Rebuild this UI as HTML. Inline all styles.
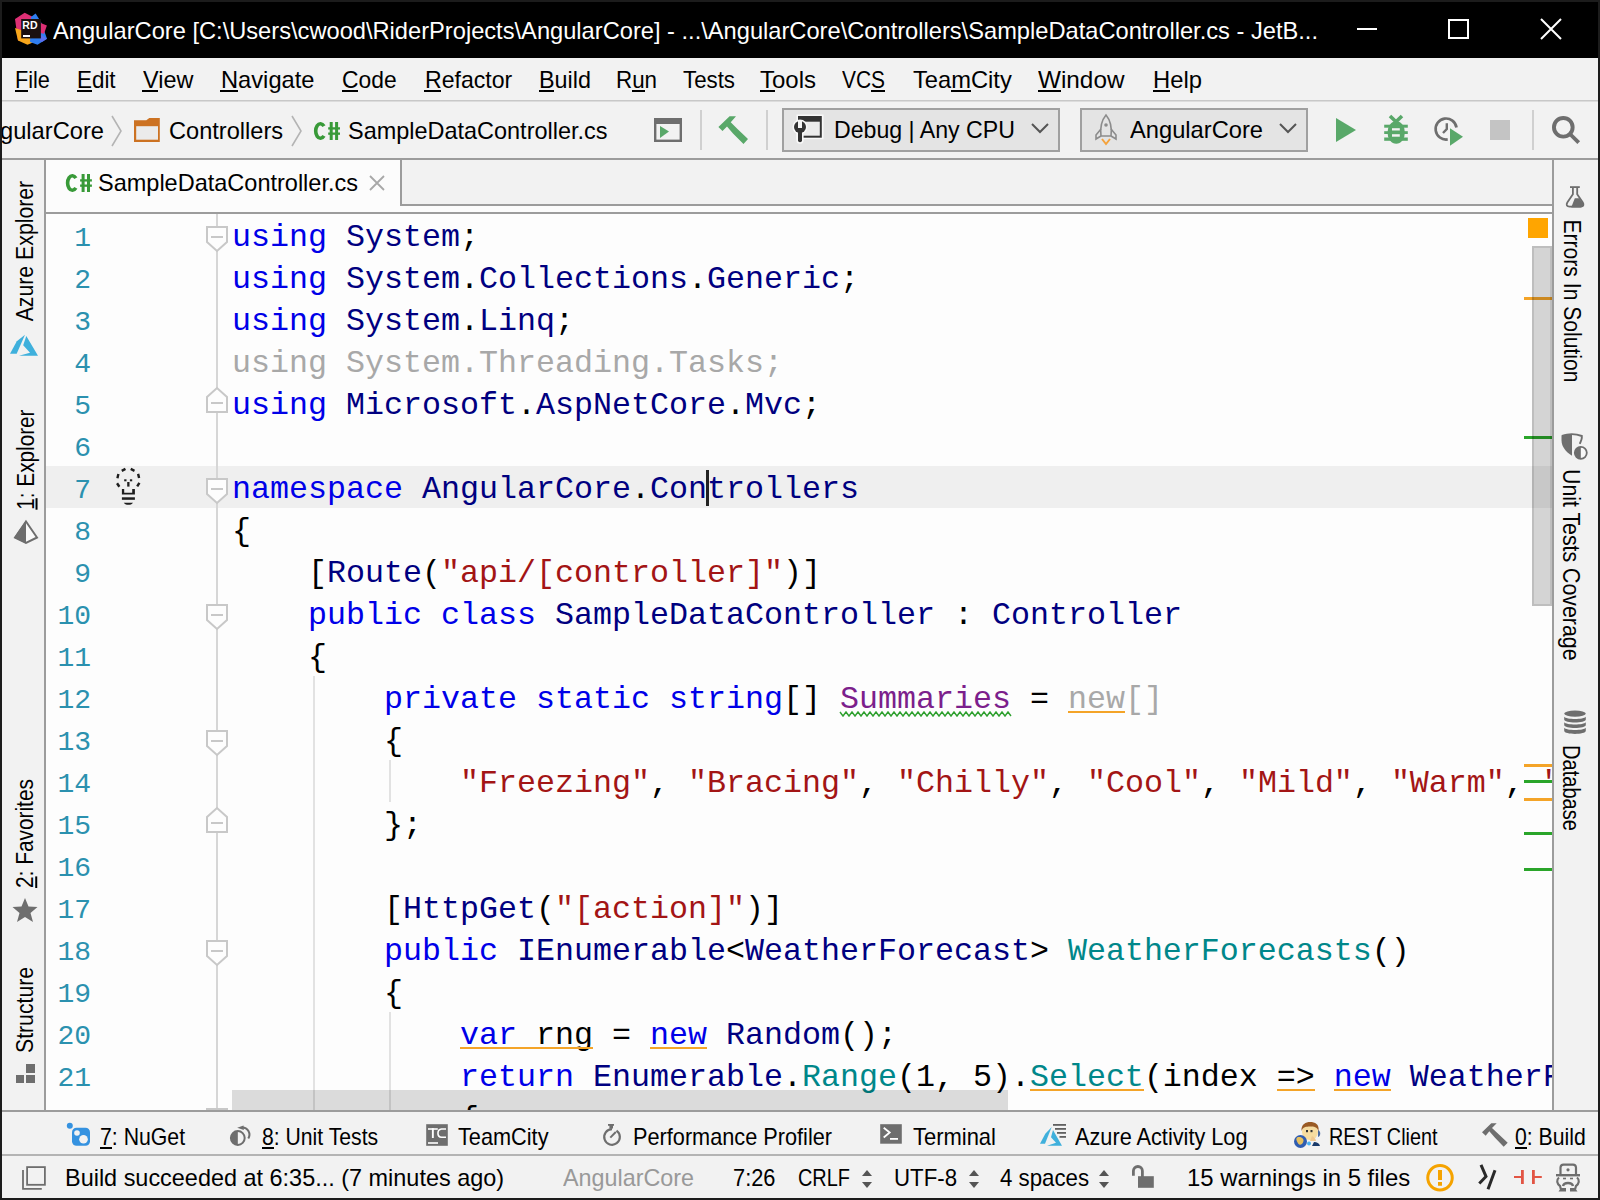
<!DOCTYPE html>
<html><head><meta charset="utf-8"><title>Rider</title>
<style>
html,body{margin:0;padding:0;}
body{width:1600px;height:1200px;position:relative;overflow:hidden;background:#1c1c1c;font-family:"Liberation Sans",sans-serif;}
.t{position:absolute;white-space:pre;font-family:"Liberation Sans",sans-serif;}
.m{position:absolute;white-space:pre;font-family:"Liberation Mono",monospace;font-size:31.667px;line-height:42px;}
.ln{left:0px;width:45px;text-align:right;color:#2b91af;font-size:28px;}
svg{overflow:visible;}
</style></head><body>
<div style="position:absolute;left:2px;top:2px;width:1596px;height:56px;background:#000;"></div>
<div style="position:absolute;left:2px;top:58px;width:1596px;height:1140px;background:#f2f2f2;"></div>
<div class="t" style="left:52.50px;top:15.68px;font-size:24px;line-height:30px;color:#fff;transform:scaleX(0.9858);transform-origin:0 0;">AngularCore [C:\Users\cwood\RiderProjects\AngularCore] - ...\AngularCore\Controllers\SampleDataController.cs - JetB...</div>
<div style="position:absolute;left:1357px;top:28px;width:20px;height:2px;background:#fff;"></div>
<svg style="position:absolute;left:1447px;top:18px;" width="23" height="22" viewBox="0 0 23 22"><rect x="2" y="2" width="19" height="18" fill="none" stroke="#fff" stroke-width="2"/></svg>
<svg style="position:absolute;left:1539px;top:17px;" width="24" height="24" viewBox="0 0 24 24"><path d="M2,2 L22,22 M22,2 L2,22" stroke="#fff" stroke-width="2"/></svg>
<div style="position:absolute;left:2px;top:100px;width:1596px;height:1px;background:#c8c8c8;"></div>
<div style="position:absolute;left:2px;top:101px;width:1596px;height:1px;background:#dcdcdc;"></div>
<div class="t" style="left:15.00px;top:64.68px;font-size:24px;line-height:30px;color:#000;transform:scaleX(0.9032);transform-origin:0 0;">File</div>
<div style="position:absolute;left:15px;top:90px;width:13px;height:2px;background:#000;"></div>
<div class="t" style="left:77.00px;top:64.68px;font-size:24px;line-height:30px;color:#000;transform:scaleX(0.9333);transform-origin:0 0;">Edit</div>
<div style="position:absolute;left:77px;top:90px;width:15px;height:2px;background:#000;"></div>
<div class="t" style="left:142.50px;top:64.68px;font-size:24px;line-height:30px;color:#000;transform:scaleX(0.9758);transform-origin:0 0;">View</div>
<div style="position:absolute;left:142px;top:90px;width:16px;height:2px;background:#000;"></div>
<div class="t" style="left:220.50px;top:64.68px;font-size:24px;line-height:30px;color:#000;transform:scaleX(0.9868);transform-origin:0 0;">Navigate</div>
<div style="position:absolute;left:220px;top:90px;width:18px;height:2px;background:#000;"></div>
<div class="t" style="left:342.00px;top:64.68px;font-size:24px;line-height:30px;color:#000;transform:scaleX(0.9513);transform-origin:0 0;">Code</div>
<div style="position:absolute;left:342px;top:90px;width:16px;height:2px;background:#000;"></div>
<div class="t" style="left:424.50px;top:64.68px;font-size:24px;line-height:30px;color:#000;transform:scaleX(0.9620);transform-origin:0 0;">Refactor</div>
<div style="position:absolute;left:424px;top:90px;width:17px;height:2px;background:#000;"></div>
<div class="t" style="left:538.80px;top:64.68px;font-size:24px;line-height:30px;color:#000;transform:scaleX(0.9728);transform-origin:0 0;">Build</div>
<div style="position:absolute;left:539px;top:90px;width:15px;height:2px;background:#000;"></div>
<div class="t" style="left:616.00px;top:64.68px;font-size:24px;line-height:30px;color:#000;transform:scaleX(0.9318);transform-origin:0 0;">Run</div>
<div style="position:absolute;left:632px;top:90px;width:13px;height:2px;background:#000;"></div>
<div class="t" style="left:683.00px;top:64.68px;font-size:24px;line-height:30px;color:#000;transform:scaleX(0.9286);transform-origin:0 0;">Tests</div>
<div class="t" style="left:760.00px;top:64.68px;font-size:24px;line-height:30px;color:#000;">Tools</div>
<div style="position:absolute;left:760px;top:90px;width:15px;height:2px;background:#000;"></div>
<div class="t" style="left:842.00px;top:64.68px;font-size:24px;line-height:30px;color:#000;transform:scaleX(0.8731);transform-origin:0 0;">VCS</div>
<div style="position:absolute;left:871px;top:90px;width:14px;height:2px;background:#000;"></div>
<div class="t" style="left:913.00px;top:64.68px;font-size:24px;line-height:30px;color:#000;transform:scaleX(0.9870);transform-origin:0 0;">TeamCity</div>
<div style="position:absolute;left:951px;top:90px;width:20px;height:2px;background:#000;"></div>
<div class="t" style="left:1038.40px;top:64.68px;font-size:24px;line-height:30px;color:#000;transform:scaleX(1.0129);transform-origin:0 0;">Window</div>
<div style="position:absolute;left:1038px;top:90px;width:23px;height:2px;background:#000;"></div>
<div class="t" style="left:1152.80px;top:64.68px;font-size:24px;line-height:30px;color:#000;transform:scaleX(0.9909);transform-origin:0 0;">Help</div>
<div style="position:absolute;left:1153px;top:90px;width:17px;height:2px;background:#000;"></div>
<div style="position:absolute;left:2px;top:158px;width:1596px;height:2px;background:#9c9c9c;"></div>
<div class="t" style="left:-29.00px;top:115.68px;font-size:24px;line-height:30px;color:#000;transform:scaleX(0.9870);transform-origin:0 0;">AngularCore</div>
<svg style="position:absolute;left:110px;top:115px;" width="14" height="32" viewBox="0 0 14 32"><path d="M2,1 L11,16 L2,31" fill="none" stroke="#b4b4b4" stroke-width="1.6"/></svg>
<div class="t" style="left:169.00px;top:115.68px;font-size:24px;line-height:30px;color:#000;transform:scaleX(0.9828);transform-origin:0 0;">Controllers</div>
<svg style="position:absolute;left:290px;top:115px;" width="14" height="32" viewBox="0 0 14 32"><path d="M2,1 L11,16 L2,31" fill="none" stroke="#b4b4b4" stroke-width="1.6"/></svg>
<div class="t" style="left:348.00px;top:115.68px;font-size:24px;line-height:30px;color:#000;transform:scaleX(0.9774);transform-origin:0 0;">SampleDataController.cs</div>
<div style="position:absolute;left:700px;top:110px;width:2px;height:40px;background:#d0d0d0;"></div>
<div style="position:absolute;left:766px;top:110px;width:2px;height:40px;background:#d0d0d0;"></div>
<svg style="position:absolute;left:782px;top:108px;" width="278" height="44" viewBox="0 0 278 44"><rect x="1" y="1" width="276" height="42" fill="#e4e4e4" stroke="#a0a0a0" stroke-width="2"/><path d="M250,16 L258,24 L266,16" fill="none" stroke="#555" stroke-width="2"/></svg>
<div class="t" style="left:834.00px;top:114.68px;font-size:24px;line-height:30px;color:#000;transform:scaleX(0.9640);transform-origin:0 0;">Debug | Any CPU</div>
<svg style="position:absolute;left:1080px;top:108px;" width="228" height="44" viewBox="0 0 228 44"><rect x="1" y="1" width="226" height="42" fill="#e4e4e4" stroke="#a0a0a0" stroke-width="2"/><path d="M26,7 C21,13 20,20 21,28 L31,28 C32,20 31,13 26,7 Z" fill="none" stroke="#8c8c8c" stroke-width="1.6"/><path d="M21,21 L16,27 L16,31 L21,28 M31,21 L36,27 L36,31 L31,28" fill="none" stroke="#8c8c8c" stroke-width="1.6"/><circle cx="26" cy="17" r="1.8" fill="#8c8c8c"/><path d="M22,31 L26,36 L30,31" fill="none" stroke="#f4a23b" stroke-width="2"/><path d="M200,16 L208,24 L216,16" fill="none" stroke="#555" stroke-width="2"/></svg>
<div class="t" style="left:1130.00px;top:114.68px;font-size:24px;line-height:30px;color:#000;transform:scaleX(0.9870);transform-origin:0 0;">AngularCore</div>
<svg style="position:absolute;left:1334px;top:116px;" width="24" height="28" viewBox="0 0 24 28"><polygon points="2,2 22,14 2,26" fill="#59a869"/></svg>
<div style="position:absolute;left:1490px;top:120px;width:20px;height:20px;background:#c4c4c4;"></div>
<div style="position:absolute;left:1532px;top:110px;width:2px;height:40px;background:#d0d0d0;"></div>
<div style="position:absolute;left:44px;top:160px;width:2px;height:952px;background:#9c9c9c;"></div>
<div class="t" style="left:0;top:0;font-size:23px;line-height:29px;color:#000;transform:translate(11.23px,321.30px) rotate(-90deg) scaleX(0.9235);transform-origin:0 0;">Azure Explorer</div>
<div class="t" style="left:0;top:0;font-size:23px;line-height:29px;color:#000;transform:translate(11.53px,509.70px) rotate(-90deg) scaleX(0.9007);transform-origin:0 0;"><u style="text-decoration-thickness:2px;text-underline-offset:2px">1</u>: Explorer</div>
<div class="t" style="left:0;top:0;font-size:23px;line-height:29px;color:#000;transform:translate(11.23px,888.00px) rotate(-90deg) scaleX(0.9064);transform-origin:0 0;"><u style="text-decoration-thickness:2px;text-underline-offset:2px">2</u>: Favorites</div>
<svg style="position:absolute;left:11px;top:896px;" width="28" height="28" viewBox="0 0 28 28"><polygon points="14,2 17.5,10.5 26.5,11 19.5,17 22,26 14,21 6,26 8.5,17 1.5,11 10.5,10.5" fill="#6e6e6e"/></svg>
<div class="t" style="left:0;top:0;font-size:23px;line-height:29px;color:#000;transform:translate(11.23px,1053.00px) rotate(-90deg) scaleX(0.9223);transform-origin:0 0;">Structure</div>
<svg style="position:absolute;left:14px;top:1062px;" width="24" height="24" viewBox="0 0 24 24"><rect x="12" y="2" width="9" height="9" fill="#6e6e6e"/><rect x="2" y="13" width="8" height="8" fill="#6e6e6e"/><rect x="12" y="13" width="9" height="8" fill="#6e6e6e"/></svg>
<div style="position:absolute;left:402px;top:160px;width:1150px;height:44px;background:#f2f2f2;"></div>
<div style="position:absolute;left:402px;top:204px;width:1150px;height:2px;background:#9c9c9c;"></div>
<div style="position:absolute;left:46px;top:160px;width:354px;height:52px;background:#fcfcfc;"></div>
<div style="position:absolute;left:400px;top:160px;width:2px;height:46px;background:#9c9c9c;"></div>
<div style="position:absolute;left:400px;top:206px;width:1152px;height:6px;background:#fcfcfc;"></div>
<div style="position:absolute;left:46px;top:212px;width:1506px;height:2px;background:#9c9c9c;"></div>
<div class="t" style="left:98.00px;top:167.68px;font-size:24px;line-height:30px;color:#000;transform:scaleX(0.9793);transform-origin:0 0;">SampleDataController.cs</div>
<svg style="position:absolute;left:368px;top:174px;" width="18" height="18" viewBox="0 0 18 18"><path d="M2,2 L16,16 M16,2 L2,16" stroke="#a8a8a8" stroke-width="1.8"/></svg>
<div style="position:absolute;left:46px;top:214px;width:1506px;height:896px;background:#fdfdfd;"></div>
<div style="position:absolute;left:46px;top:466px;width:1506px;height:42px;background:#efefef;"></div>
<div style="position:absolute;left:216px;top:214px;width:2px;height:896px;background:#d6d6d6;"></div>
<svg style="position:absolute;left:206px;top:226px;" width="22" height="27" viewBox="0 0 22 27"><path d="M1,1 L21,1 L21,16 L11,25 L1,16 Z" fill="#fdfdfd" stroke="#c8c8c8" stroke-width="2"/><rect x="5" y="10" width="12" height="2" fill="#c8c8c8"/></svg>
<svg style="position:absolute;left:206px;top:478px;" width="22" height="27" viewBox="0 0 22 27"><path d="M1,1 L21,1 L21,16 L11,25 L1,16 Z" fill="#fdfdfd" stroke="#c8c8c8" stroke-width="2"/><rect x="5" y="10" width="12" height="2" fill="#c8c8c8"/></svg>
<svg style="position:absolute;left:206px;top:604px;" width="22" height="27" viewBox="0 0 22 27"><path d="M1,1 L21,1 L21,16 L11,25 L1,16 Z" fill="#fdfdfd" stroke="#c8c8c8" stroke-width="2"/><rect x="5" y="10" width="12" height="2" fill="#c8c8c8"/></svg>
<svg style="position:absolute;left:206px;top:730px;" width="22" height="27" viewBox="0 0 22 27"><path d="M1,1 L21,1 L21,16 L11,25 L1,16 Z" fill="#fdfdfd" stroke="#c8c8c8" stroke-width="2"/><rect x="5" y="10" width="12" height="2" fill="#c8c8c8"/></svg>
<svg style="position:absolute;left:206px;top:940px;" width="22" height="27" viewBox="0 0 22 27"><path d="M1,1 L21,1 L21,16 L11,25 L1,16 Z" fill="#fdfdfd" stroke="#c8c8c8" stroke-width="2"/><rect x="5" y="10" width="12" height="2" fill="#c8c8c8"/></svg>
<div style="position:absolute;left:206px;top:1108px;width:22px;height:2px;background:#c8c8c8;"></div>
<svg style="position:absolute;left:206px;top:386px;" width="22" height="28" viewBox="0 0 22 28"><path d="M1,26 L21,26 L21,11 L11,2 L1,11 Z" fill="#fdfdfd" stroke="#c8c8c8" stroke-width="2"/><rect x="5" y="16" width="12" height="2" fill="#c8c8c8"/></svg>
<svg style="position:absolute;left:206px;top:806px;" width="22" height="28" viewBox="0 0 22 28"><path d="M1,26 L21,26 L21,11 L11,2 L1,11 Z" fill="#fdfdfd" stroke="#c8c8c8" stroke-width="2"/><rect x="5" y="16" width="12" height="2" fill="#c8c8c8"/></svg>
<div style="position:absolute;left:313px;top:676px;width:2px;height:434px;background:#e2e2e2;"></div>
<div style="position:absolute;left:389px;top:760px;width:2px;height:42px;background:#e2e2e2;"></div>
<div style="position:absolute;left:389px;top:1012px;width:2px;height:98px;background:#e2e2e2;"></div>
<div style="position:absolute;left:46px;top:214px;width:1506px;height:896px;overflow:hidden;">
<div class="m ln" style="top:3.60px;">1</div>
<div class="m ln" style="top:45.60px;">2</div>
<div class="m ln" style="top:87.60px;">3</div>
<div class="m ln" style="top:129.60px;">4</div>
<div class="m ln" style="top:171.60px;">5</div>
<div class="m ln" style="top:213.60px;">6</div>
<div class="m ln" style="top:255.60px;">7</div>
<div class="m ln" style="top:297.60px;">8</div>
<div class="m ln" style="top:339.60px;">9</div>
<div class="m ln" style="top:381.60px;">10</div>
<div class="m ln" style="top:423.60px;">11</div>
<div class="m ln" style="top:465.60px;">12</div>
<div class="m ln" style="top:507.60px;">13</div>
<div class="m ln" style="top:549.60px;">14</div>
<div class="m ln" style="top:591.60px;">15</div>
<div class="m ln" style="top:633.60px;">16</div>
<div class="m ln" style="top:675.60px;">17</div>
<div class="m ln" style="top:717.60px;">18</div>
<div class="m ln" style="top:759.60px;">19</div>
<div class="m ln" style="top:801.60px;">20</div>
<div class="m ln" style="top:843.60px;">21</div>
<div class="m ln" style="top:885.60px;">22</div>
<div class="m" style="left:186px;top:2.57px;"><span style="color:#0000e8">using</span><span style="color:#000"> </span><span style="color:#000080">System</span><span style="color:#000">;</span></div>
<div class="m" style="left:186px;top:44.57px;"><span style="color:#0000e8">using</span><span style="color:#000"> </span><span style="color:#000080">System</span><span style="color:#000">.</span><span style="color:#000080">Collections</span><span style="color:#000">.</span><span style="color:#000080">Generic</span><span style="color:#000">;</span></div>
<div class="m" style="left:186px;top:86.57px;"><span style="color:#0000e8">using</span><span style="color:#000"> </span><span style="color:#000080">System</span><span style="color:#000">.</span><span style="color:#000080">Linq</span><span style="color:#000">;</span></div>
<div class="m" style="left:186px;top:128.57px;"><span style="color:#a8a8a8">using System.Threading.Tasks;</span></div>
<div class="m" style="left:186px;top:170.57px;"><span style="color:#0000e8">using</span><span style="color:#000"> </span><span style="color:#000080">Microsoft</span><span style="color:#000">.</span><span style="color:#000080">AspNetCore</span><span style="color:#000">.</span><span style="color:#000080">Mvc</span><span style="color:#000">;</span></div>
<div class="m" style="left:186px;top:212.57px;"></div>
<div class="m" style="left:186px;top:254.57px;"><span style="color:#0000e8">namespace</span><span style="color:#000"> </span><span style="color:#000080">AngularCore</span><span style="color:#000">.</span><span style="color:#000080">Controllers</span></div>
<div class="m" style="left:186px;top:296.57px;"><span style="color:#000">{</span></div>
<div class="m" style="left:186px;top:338.57px;"><span style="color:#000">    [</span><span style="color:#000080">Route</span><span style="color:#000">(</span><span style="color:#a31515">&quot;api/[controller]&quot;</span><span style="color:#000">)]</span></div>
<div class="m" style="left:186px;top:380.57px;"><span style="color:#000">    </span><span style="color:#0000e8">public</span><span style="color:#000"> </span><span style="color:#0000e8">class</span><span style="color:#000"> </span><span style="color:#000080">SampleDataController</span><span style="color:#000"> : </span><span style="color:#000080">Controller</span></div>
<div class="m" style="left:186px;top:422.57px;"><span style="color:#000">    {</span></div>
<div class="m" style="left:186px;top:464.57px;"><span style="color:#000">        </span><span style="color:#0000e8">private</span><span style="color:#000"> </span><span style="color:#0000e8">static</span><span style="color:#000"> </span><span style="color:#0000e8">string</span><span style="color:#000">[] </span><span style="color:#7c1f8c">Summaries</span><span style="color:#000"> = </span><span style="color:#a8a8a8">new[]</span></div>
<div class="m" style="left:186px;top:506.57px;"><span style="color:#000">        {</span></div>
<div class="m" style="left:186px;top:548.57px;"><span style="color:#000">            </span><span style="color:#a31515">&quot;Freezing&quot;</span><span style="color:#000">, </span><span style="color:#a31515">&quot;Bracing&quot;</span><span style="color:#000">, </span><span style="color:#a31515">&quot;Chilly&quot;</span><span style="color:#000">, </span><span style="color:#a31515">&quot;Cool&quot;</span><span style="color:#000">, </span><span style="color:#a31515">&quot;Mild&quot;</span><span style="color:#000">, </span><span style="color:#a31515">&quot;Warm&quot;</span><span style="color:#000">, </span><span style="color:#a31515">&quot;Balmy&quot;</span></div>
<div class="m" style="left:186px;top:590.57px;"><span style="color:#000">        };</span></div>
<div class="m" style="left:186px;top:632.57px;"></div>
<div class="m" style="left:186px;top:674.57px;"><span style="color:#000">        [</span><span style="color:#000080">HttpGet</span><span style="color:#000">(</span><span style="color:#a31515">&quot;[action]&quot;</span><span style="color:#000">)]</span></div>
<div class="m" style="left:186px;top:716.57px;"><span style="color:#000">        </span><span style="color:#0000e8">public</span><span style="color:#000"> </span><span style="color:#000080">IEnumerable</span><span style="color:#000">&lt;</span><span style="color:#000080">WeatherForecast</span><span style="color:#000">&gt; </span><span style="color:#00878a">WeatherForecasts</span><span style="color:#000">()</span></div>
<div class="m" style="left:186px;top:758.57px;"><span style="color:#000">        {</span></div>
<div class="m" style="left:186px;top:800.57px;"><span style="color:#000">            </span><span style="color:#0000e8">var</span><span style="color:#000"> </span><span style="color:#000">rng</span><span style="color:#000"> = </span><span style="color:#0000e8">new</span><span style="color:#000"> </span><span style="color:#000080">Random</span><span style="color:#000">();</span></div>
<div class="m" style="left:186px;top:842.57px;"><span style="color:#000">            </span><span style="color:#0000e8">return</span><span style="color:#000"> </span><span style="color:#000080">Enumerable</span><span style="color:#000">.</span><span style="color:#00878a">Range</span><span style="color:#000">(1, 5).</span><span style="color:#00878a">Select</span><span style="color:#000">(index </span><span style="color:#000">=&gt;</span><span style="color:#000"> </span><span style="color:#0000e8">new</span><span style="color:#000"> </span><span style="color:#000080">WeatherForecast</span></div>
<div class="m" style="left:186px;top:884.57px;"><span style="color:#000">            {</span></div>
</div>
<div style="position:absolute;left:706px;top:470px;width:3px;height:36px;background:#222;"></div>
<div style="position:absolute;left:1068px;top:711px;width:57px;height:2px;background:#f4a428;"></div>
<div style="position:absolute;left:460px;top:1047px;width:133px;height:2px;background:#f4a428;"></div>
<div style="position:absolute;left:650px;top:1047px;width:57px;height:2px;background:#f4a428;"></div>
<div style="position:absolute;left:1030px;top:1089px;width:114px;height:2px;background:#f4a428;"></div>
<div style="position:absolute;left:1277px;top:1089px;width:38px;height:2px;background:#f4a428;"></div>
<div style="position:absolute;left:1334px;top:1089px;width:57px;height:2px;background:#f4a428;"></div>
<svg style="position:absolute;left:840px;top:712px;" width="173" height="6" viewBox="0 0 173 6"><polyline points="0.0,0 3.0,4 6.0,0 9.0,4 12.0,0 15.0,4 18.0,0 21.0,4 24.0,0 27.0,4 30.0,0 33.0,4 36.0,0 39.0,4 42.0,0 45.0,4 48.0,0 51.0,4 54.0,0 57.0,4 60.0,0 63.0,4 66.0,0 69.0,4 72.0,0 75.0,4 78.0,0 81.0,4 84.0,0 87.0,4 90.0,0 93.0,4 96.0,0 99.0,4 102.0,0 105.0,4 108.0,0 111.0,4 114.0,0 117.0,4 120.0,0 123.0,4 126.0,0 129.0,4 132.0,0 135.0,4 138.0,0 141.0,4 144.0,0 147.0,4 150.0,0 153.0,4 156.0,0 159.0,4 162.0,0 165.0,4 168.0,0 171.0,4" fill="none" stroke="#2ea02e" stroke-width="1.4"/></svg>
<div style="position:absolute;left:1528px;top:218px;width:20px;height:20px;background:#ffa500;"></div>
<div style="position:absolute;left:1524px;top:297px;width:28px;height:3px;background:#f4a428;"></div>
<div style="position:absolute;left:1524px;top:436px;width:28px;height:3px;background:#2aa52a;"></div>
<div style="position:absolute;left:1524px;top:764px;width:28px;height:3px;background:#f4a428;"></div>
<div style="position:absolute;left:1524px;top:780px;width:28px;height:3px;background:#2aa52a;"></div>
<div style="position:absolute;left:1524px;top:798px;width:28px;height:3px;background:#f4a428;"></div>
<div style="position:absolute;left:1524px;top:832px;width:28px;height:3px;background:#2aa52a;"></div>
<div style="position:absolute;left:1524px;top:868px;width:28px;height:3px;background:#2aa52a;"></div>
<div style="position:absolute;left:1532px;top:246px;width:20px;height:360px;background:rgba(0,0,0,0.16);box-sizing:border-box;border:2px solid rgba(0,0,0,0.1);"></div>
<div style="position:absolute;left:232px;top:1090px;width:776px;height:20px;background:rgba(0,0,0,0.135);"></div>
<div style="position:absolute;left:1552px;top:160px;width:2px;height:952px;background:#9c9c9c;"></div>
<div class="t" style="left:0;top:0;font-size:23px;line-height:29px;color:#000;transform:translate(1585.97px,219.50px) rotate(90deg) scaleX(0.9170);transform-origin:0 0;">Errors In Solution</div>
<div class="t" style="left:0;top:0;font-size:23px;line-height:29px;color:#000;transform:translate(1585.47px,469.00px) rotate(90deg) scaleX(0.9267);transform-origin:0 0;">Unit Tests Coverage</div>
<div class="t" style="left:0;top:0;font-size:23px;line-height:29px;color:#000;transform:translate(1585.47px,745.00px) rotate(90deg) scaleX(0.8731);transform-origin:0 0;">Database</div>
<div style="position:absolute;left:2px;top:1110px;width:1596px;height:2px;background:#9c9c9c;"></div>
<div style="position:absolute;left:2px;top:1154px;width:1596px;height:2px;background:#b4b4b4;"></div>
<div class="t" style="left:100.00px;top:1121.68px;font-size:24px;line-height:30px;color:#000;transform:scaleX(0.8854);transform-origin:0 0;">7: NuGet</div>
<div style="position:absolute;left:100px;top:1147px;width:12px;height:2px;background:#000;"></div>
<div class="t" style="left:262.00px;top:1121.68px;font-size:24px;line-height:30px;color:#000;transform:scaleX(0.8821);transform-origin:0 0;">8: Unit Tests</div>
<div style="position:absolute;left:262px;top:1147px;width:12px;height:2px;background:#000;"></div>
<div class="t" style="left:458.00px;top:1121.68px;font-size:24px;line-height:30px;color:#000;transform:scaleX(0.9050);transform-origin:0 0;">TeamCity</div>
<div class="t" style="left:633.00px;top:1121.68px;font-size:24px;line-height:30px;color:#000;transform:scaleX(0.9045);transform-origin:0 0;">Performance Profiler</div>
<div class="t" style="left:912.60px;top:1121.68px;font-size:24px;line-height:30px;color:#000;transform:scaleX(0.9146);transform-origin:0 0;">Terminal</div>
<div class="t" style="left:1074.50px;top:1121.68px;font-size:24px;line-height:30px;color:#000;transform:scaleX(0.9043);transform-origin:0 0;">Azure Activity Log</div>
<div class="t" style="left:1328.50px;top:1121.68px;font-size:24px;line-height:30px;color:#000;transform:scaleX(0.8236);transform-origin:0 0;">REST Client</div>
<div class="t" style="left:1515.00px;top:1121.68px;font-size:24px;line-height:30px;color:#000;transform:scaleX(0.8838);transform-origin:0 0;">0: Build</div>
<div style="position:absolute;left:1515px;top:1147px;width:12px;height:2px;background:#000;"></div>
<div class="t" style="left:64.75px;top:1162.68px;font-size:24px;line-height:30px;color:#000;transform:scaleX(0.9766);transform-origin:0 0;">Build succeeded at 6:35... (7 minutes ago)</div>
<div class="t" style="left:562.75px;top:1162.68px;font-size:24px;line-height:30px;color:#999;transform:scaleX(0.9722);transform-origin:0 0;">AngularCore</div>
<div class="t" style="left:732.50px;top:1162.68px;font-size:24px;line-height:30px;color:#000;transform:scaleX(0.9091);transform-origin:0 0;">7:26</div>
<div class="t" style="left:798.00px;top:1162.68px;font-size:24px;line-height:30px;color:#000;transform:scaleX(0.8287);transform-origin:0 0;">CRLF</div>
<svg style="position:absolute;left:860px;top:1168px;" width="14" height="22" viewBox="0 0 14 22"><polygon points="7,2 12,8 2,8" fill="#555"/><polygon points="7,20 12,14 2,14" fill="#555"/></svg>
<div class="t" style="left:894.00px;top:1162.68px;font-size:24px;line-height:30px;color:#000;transform:scaleX(0.9265);transform-origin:0 0;">UTF-8</div>
<svg style="position:absolute;left:967px;top:1168px;" width="14" height="22" viewBox="0 0 14 22"><polygon points="7,2 12,8 2,8" fill="#555"/><polygon points="7,20 12,14 2,14" fill="#555"/></svg>
<div class="t" style="left:1000.00px;top:1162.68px;font-size:24px;line-height:30px;color:#000;transform:scaleX(0.9271);transform-origin:0 0;">4 spaces</div>
<svg style="position:absolute;left:1097px;top:1168px;" width="14" height="22" viewBox="0 0 14 22"><polygon points="7,2 12,8 2,8" fill="#555"/><polygon points="7,20 12,14 2,14" fill="#555"/></svg>
<div class="t" style="left:1187.00px;top:1162.68px;font-size:24px;line-height:30px;color:#000;transform:scaleX(0.9955);transform-origin:0 0;">15 warnings in 5 files</div>
<svg style="position:absolute;left:0;top:0" width="1600" height="1200" viewBox="0 0 1600 1200"><polygon points="15,19 24.7,12.8 33,17 33,38 18,40.6" fill="#dd2f74"/>
<polygon points="15,28 18,40.6 27.5,44.7 34,42 33,34" fill="#f7a61b"/>
<polygon points="31,17 35.6,13.4 41,22 47,38.7 37.5,44.7 30,42" fill="#2f7ef0"/>
<polygon points="40,22.8 46.9,25.6 44,33.8 40,33" fill="#dd2f74"/>
<polygon points="40,34 47,38.7 42,42 40,41" fill="#5b6ef0"/>
<rect x="21.2" y="19" width="19.7" height="19.4" fill="#1a1010"/>
<text x="22.3" y="29.3" font-family="Liberation Sans" font-weight="bold" font-size="10.5" fill="#fff">RD</text>
<rect x="23" y="35" width="7" height="2" fill="#fff"/><path d="M134,120.3 L146.3,120.3 L149.3,118 L159.8,118 L159.8,142 L134,142 Z" fill="#cc7222"/><rect x="136.2" y="126.2" width="21.8" height="13.5" fill="#ebebeb"/><path d="M323.98,126.12 A4.75,7.30 0 1 0 323.98,135.88" fill="none" stroke="#389a38" stroke-width="3.6"/><rect x="329.70" y="122.00" width="3" height="18" fill="#389a38"/><rect x="335.10" y="122.00" width="3" height="18" fill="#389a38"/><rect x="328.20" y="127.25" width="11.8" height="2.3" fill="#389a38"/><rect x="328.20" y="132.50" width="11.8" height="2.3" fill="#389a38"/><rect x="655.2" y="119.2" width="25.6" height="21.6" fill="none" stroke="#6e6e6e" stroke-width="2.4"/><rect x="654" y="118" width="28" height="6" fill="#6e6e6e"/><polygon points="660,126 669,131.6 660,138" fill="#59a869"/><path d="M718.4,127.1 L729.6,116.25 L736,116.25 L730.75,122.25 L737.5,129 L748,139.1 L743.5,144 L733,133.5 L727,126.4 L722.5,130.9 Z" fill="#59a869"/><rect x="796.5" y="114.5" width="27" height="24.7" fill="#f8f8f8"/><rect x="798" y="116" width="23.8" height="21.7" fill="#333"/><rect x="800" y="121.7" width="19.8" height="14" fill="#ececec"/><circle cx="800" cy="127" r="7.6" fill="#f8f8f8"/><rect x="796.4" y="128" width="7.2" height="15.8" rx="3.6" fill="#f8f8f8"/><circle cx="800" cy="127" r="6" fill="#333"/><rect x="798" y="120" width="4" height="8" fill="#f4f4f4"/><rect x="798" y="128" width="4" height="14.3" rx="2" fill="#333"/><g fill="#59a869"><ellipse cx="1396.2" cy="132.5" rx="8.7" ry="11.2"/><rect x="1384.2" y="124.7" width="23.6" height="3"/><rect x="1384.2" y="131.2" width="23.6" height="2.8"/><rect x="1384.2" y="137.5" width="23.6" height="3.3"/></g><path d="M1390,116 L1396,121.8 L1402,116" fill="none" stroke="#59a869" stroke-width="3.6"/><rect x="1392" y="128.2" width="7.8" height="2.3" fill="#f2f2f2"/><rect x="1392" y="134.2" width="7.8" height="2.5" fill="#f2f2f2"/><path d="M1456.5,127.5 A10.5,10.5 0 1 0 1447.7,139.4" fill="none" stroke="#6e6e6e" stroke-width="2.7"/><path d="M1446.8,123.3 L1446.8,129 L1443,133" fill="none" stroke="#6e6e6e" stroke-width="2.4"/><polygon points="1450,128.2 1463,136.8 1450,145.7" fill="#59a869"/><circle cx="1563.3" cy="127.3" r="9.35" fill="none" stroke="#6e6e6e" stroke-width="3.9"/><path d="M1570.5,134.5 L1578.7,142.7" stroke="#6e6e6e" stroke-width="3.8"/><polygon points="25,334.7 16.8,341.3 10,353.7 16.7,353.7" fill="#3fb0dc"/><polygon points="26.3,336 38,355.7 19,355.7 30,352.7 23.2,345.3" fill="#3fb0dc"/><polygon points="26,521.5 37,537.5 26,543 15,537.5" fill="#fafafa" stroke="#6e6e6e" stroke-width="2" stroke-linejoin="miter"/><polygon points="26,520.6 26,543.5 14.2,537.5" fill="#6e6e6e"/><path d="M75.88,178.12 A4.75,7.30 0 1 0 75.88,187.88" fill="none" stroke="#389a38" stroke-width="3.6"/><rect x="81.60" y="174.00" width="3" height="18" fill="#389a38"/><rect x="87.00" y="174.00" width="3" height="18" fill="#389a38"/><rect x="80.10" y="179.25" width="11.8" height="2.3" fill="#389a38"/><rect x="80.10" y="184.50" width="11.8" height="2.3" fill="#389a38"/><path d="M121.75,470.89 L125.45,468.91" stroke="#1e1e1e" stroke-width="2.4"/><path d="M130.73,468.94 L134.47,470.86" stroke="#1e1e1e" stroke-width="2.4"/><path d="M117.42,478.15 L118.38,474.05" stroke="#1e1e1e" stroke-width="2.4"/><path d="M138.09,473.86 L139.11,477.94" stroke="#1e1e1e" stroke-width="2.4"/><path d="M119.34,486.76 L117.06,483.24" stroke="#1e1e1e" stroke-width="2.4"/><path d="M139.40,482.91 L137.20,486.49" stroke="#1e1e1e" stroke-width="2.4"/><rect x="124.2" y="479.3" width="2.3" height="2" fill="#1e1e1e"/><rect x="129.9" y="479.3" width="2.3" height="2" fill="#1e1e1e"/><rect x="127.2" y="482" width="2.3" height="4.6" fill="#1e1e1e"/><path d="M121.9,489 L124.2,489 L124.2,492.7 L132.2,492.7 L132.2,489 L134.9,489 L134.9,494.6 L121.9,494.6 Z" fill="#1e1e1e"/><rect x="121.9" y="497.3" width="13" height="2.5" fill="#1e1e1e"/><path d="M123.8,502.7 L133,502.7 C132,504.4 130,504.8 128.4,504.8 C126.8,504.8 124.8,504.4 123.8,502.7 Z" fill="#1e1e1e"/><rect x="1570" y="186.2" width="9.8" height="1.8" fill="#6e6e6e"/><path d="M1572.9,187.5 L1572.9,194.3 L1567.3,202.5 C1565.8,205.2 1567,206.6 1569.5,206.6 L1580.8,206.6 C1583.2,206.6 1584.3,205.2 1582.8,202.5 L1577.2,194.3 L1577.2,187.5" fill="none" stroke="#6e6e6e" stroke-width="1.8"/><path d="M1574.8,198.3 L1579.2,198.3 L1582.8,203 C1584.2,205.6 1583,207.4 1580.5,207.4 L1571.2,207.4 Z" fill="#6e6e6e"/><path d="M1562,435.8 C1568,433.8 1576,433.8 1581.8,436 L1581.8,438 C1581.6,440 1580.5,442 1579.8,443.8" fill="none" stroke="#6e6e6e" stroke-width="1.9"/><path d="M1561.5,435.5 C1565,434.5 1568,434.3 1572,434.3 L1572,455.8 C1566,452 1561.5,447 1561.5,440 Z" fill="#6e6e6e"/><circle cx="1580.8" cy="452.8" r="6" fill="#f8f8f8" stroke="#6e6e6e" stroke-width="1.8"/><path d="M1580.8,446.8 A6,6 0 0 0 1580.8,458.8 Z" fill="#6e6e6e"/><g fill="#6e6e6e"><ellipse cx="1575" cy="713.6" rx="10.8" ry="3.1"/><path d="M1564.2,716.8 C1566,719.8 1584,719.8 1585.8,716.8 L1585.8,719.5 C1585.8,723.5 1564.2,723.5 1564.2,719.5 Z"/><path d="M1564.2,722.3 C1566,725.3 1584,725.3 1585.8,722.3 L1585.8,725 C1585.8,729 1564.2,729 1564.2,725 Z"/><path d="M1564.2,727.8 C1566,730.8 1584,730.8 1585.8,727.8 L1585.8,730.8 C1585.8,735 1564.2,735 1564.2,730.8 Z"/></g><circle cx="69.8" cy="1125.8" r="3" fill="#3592e0"/><rect x="72" y="1127.8" width="18" height="18" rx="4.5" fill="#3592e0"/><circle cx="77" cy="1133" r="2.8" fill="#f2f2f2"/><circle cx="83.5" cy="1139.3" r="4.3" fill="#f2f2f2"/><path d="M244.5,1140 A7,7 0 1 0 237,1145.5" fill="none"/><circle cx="237.8" cy="1138" r="6.9" fill="#f2f2f2" stroke="#6e6e6e" stroke-width="2"/><path d="M237.8,1131 A7,7 0 0 0 237.8,1145 Z" fill="#6e6e6e"/><path d="M242,1127.5 A7.2,7.2 0 0 1 248.3,1138.5" fill="none" stroke="#6e6e6e" stroke-width="2"/><polygon points="237.2,1127.7 243.5,1125.6 243.8,1130" fill="#6e6e6e"/><rect x="426.2" y="1124.2" width="21.6" height="21.6" fill="#6e6e6e"/><rect x="428" y="1128.2" width="9.8" height="1.6" fill="#fff"/><rect x="431.9" y="1128.2" width="1.9" height="9.8" fill="#fff"/><path d="M446,1129 L441.5,1129 A4.2,4.2 0 0 0 441.5,1137.3 L446,1137.3" fill="none" stroke="#fff" stroke-width="1.6"/><rect x="428" y="1142.2" width="10" height="1.6" fill="#fff"/><path d="M616.5,1130.6 A7.8,7.8 0 1 1 612,1129.2" fill="none" stroke="#6e6e6e" stroke-width="2.2"/><rect x="608" y="1124" width="6" height="1.8" fill="#6e6e6e"/><rect x="609.4" y="1125" width="3.6" height="3.5" fill="#6e6e6e"/><path d="M610.3,1137.6 L615.8,1132" stroke="#6e6e6e" stroke-width="2"/><rect x="880.2" y="1124.2" width="21.6" height="19.5" fill="#6e6e6e"/><path d="M883.7,1127.7 L889.7,1132.5 L883.7,1137.5" fill="none" stroke="#fff" stroke-width="1.8"/><rect x="890" y="1138" width="8" height="1.8" fill="#fff"/><polygon points="1051.7,1127 1045.3,1133.7 1040,1143.7 1045,1143.7" fill="#3fb0dc"/><polygon points="1053,1130 1062,1145.7 1047,1145.7 1056,1142.7 1051,1137.3" fill="#3fb0dc"/><g fill="#606060"><rect x="1053" y="1124" width="13" height="1.8"/><rect x="1055" y="1128" width="11" height="1.8"/><rect x="1057" y="1132" width="9" height="1.8"/><rect x="1059.5" y="1136" width="6.5" height="1.8"/></g><path d="M1318,1130 C1321,1131 1321,1136 1318,1137 Z" fill="#4a6aa0"/><ellipse cx="1310" cy="1132" rx="8" ry="8" fill="#f6dca0"/><path d="M1301.5,1131 C1301,1124 1306,1122 1310,1122 C1315,1122 1319.5,1124 1318.5,1131 C1317,1127 1314,1126.5 1310,1126.5 C1306,1126.5 1303,1127 1301.5,1131 Z" fill="#9a5a24"/><rect x="1306" y="1130" width="2" height="2.2" fill="#333"/><rect x="1310.5" y="1130" width="2" height="2.2" fill="#333"/><path d="M1312,1136 C1314,1137 1316,1139 1316,1141 L1310,1141 Z" fill="#f0c890"/><path d="M1312,1146 L1320,1146 C1319,1143 1317,1142 1314,1142 Z" fill="#1a3a6a"/><circle cx="1309" cy="1143.5" r="2" fill="#4ab0f0"/><circle cx="1300.5" cy="1141.5" r="6.5" fill="#2f5cb0"/><path d="M1297,1137.5 C1300,1136 1304,1138 1303.5,1141 C1303,1144 1300,1146 1298.5,1144 C1297,1142 1295.5,1139 1297,1137.5 Z" fill="#e6c060"/><path d="M1482,1132.3 L1491.3,1123.3 L1496.7,1123.3 L1492,1128 L1498.7,1134.3 L1507.7,1142.7 L1503.7,1146.7 L1495,1137.7 L1489.3,1131.3 L1485.7,1135.7 Z" fill="#6e6e6e"/><rect x="27.1" y="1167.1" width="17.8" height="17.7" fill="none" stroke="#6e6e6e" stroke-width="1.8"/><path d="M23,1170 L23,1188.9 L41.8,1188.9" fill="none" stroke="#6e6e6e" stroke-width="1.8"/><path d="M1133.4,1175.7 L1133.4,1171 A4.25,4.25 0 0 1 1142.4,1171 L1142.4,1177" fill="none" stroke="#6e6e6e" stroke-width="2.8"/><rect x="1138" y="1176.2" width="15.8" height="11.6" fill="#6e6e6e"/><circle cx="1440" cy="1177.75" r="12.25" fill="none" stroke="#f5a300" stroke-width="3"/><rect x="1438" y="1170" width="4" height="10" fill="#f5a300"/><rect x="1438" y="1182" width="4" height="3.75" fill="#f5a300"/><path d="M1481,1164.8 L1486,1176.5 L1479.3,1183.5 M1495,1170.2 L1488,1189.3" fill="none" stroke="#2a2a2a" stroke-width="3" stroke-linecap="butt"/><g fill="#e25544"><rect x="1514" y="1176" width="8" height="2"/><rect x="1521" y="1170" width="2.8" height="14"/><rect x="1532" y="1170" width="2.8" height="14"/><rect x="1534" y="1176" width="7.8" height="2"/></g><path d="M1560.5,1174.5 L1560.5,1167.5 A3,3 0 0 1 1563.5,1164.7 L1573,1164.7 A3,3 0 0 1 1576,1167.5 L1576,1174.5" fill="none" stroke="#6e6e6e" stroke-width="2.2"/><path d="M1556,1175.2 L1580,1175.2" stroke="#6e6e6e" stroke-width="2.4"/><circle cx="1568" cy="1169.8" r="1.6" fill="#6e6e6e"/><path d="M1559,1177.5 C1556,1180 1557,1184 1560,1186 L1561,1189.5 M1577,1177.5 C1580,1180 1579,1184 1576,1186 L1575,1189.5" fill="none" stroke="#6e6e6e" stroke-width="2.2"/><path d="M1563,1186 C1564,1182 1572,1182 1573,1186" fill="none" stroke="#6e6e6e" stroke-width="2.4"/><rect x="1563" y="1177.7" width="3" height="1.6" fill="#6e6e6e"/><rect x="1570" y="1177.7" width="3" height="1.6" fill="#6e6e6e"/><path d="M1558.5,1191.5 L1566,1191.5 L1566,1188 L1561,1188 Z M1570,1191.5 L1577.5,1191.5 L1575,1188 L1570,1188 Z" fill="#6e6e6e"/></svg>
<div style="position:absolute;left:0px;top:0px;width:1600px;height:2px;background:#1c1c1c;"></div>
<div style="position:absolute;left:0px;top:0px;width:2px;height:1200px;background:#1c1c1c;"></div>
<div style="position:absolute;left:1598px;top:0px;width:2px;height:1200px;background:#1c1c1c;"></div>
<div style="position:absolute;left:0px;top:1198px;width:1600px;height:2px;background:#1c1c1c;"></div>
</body></html>
